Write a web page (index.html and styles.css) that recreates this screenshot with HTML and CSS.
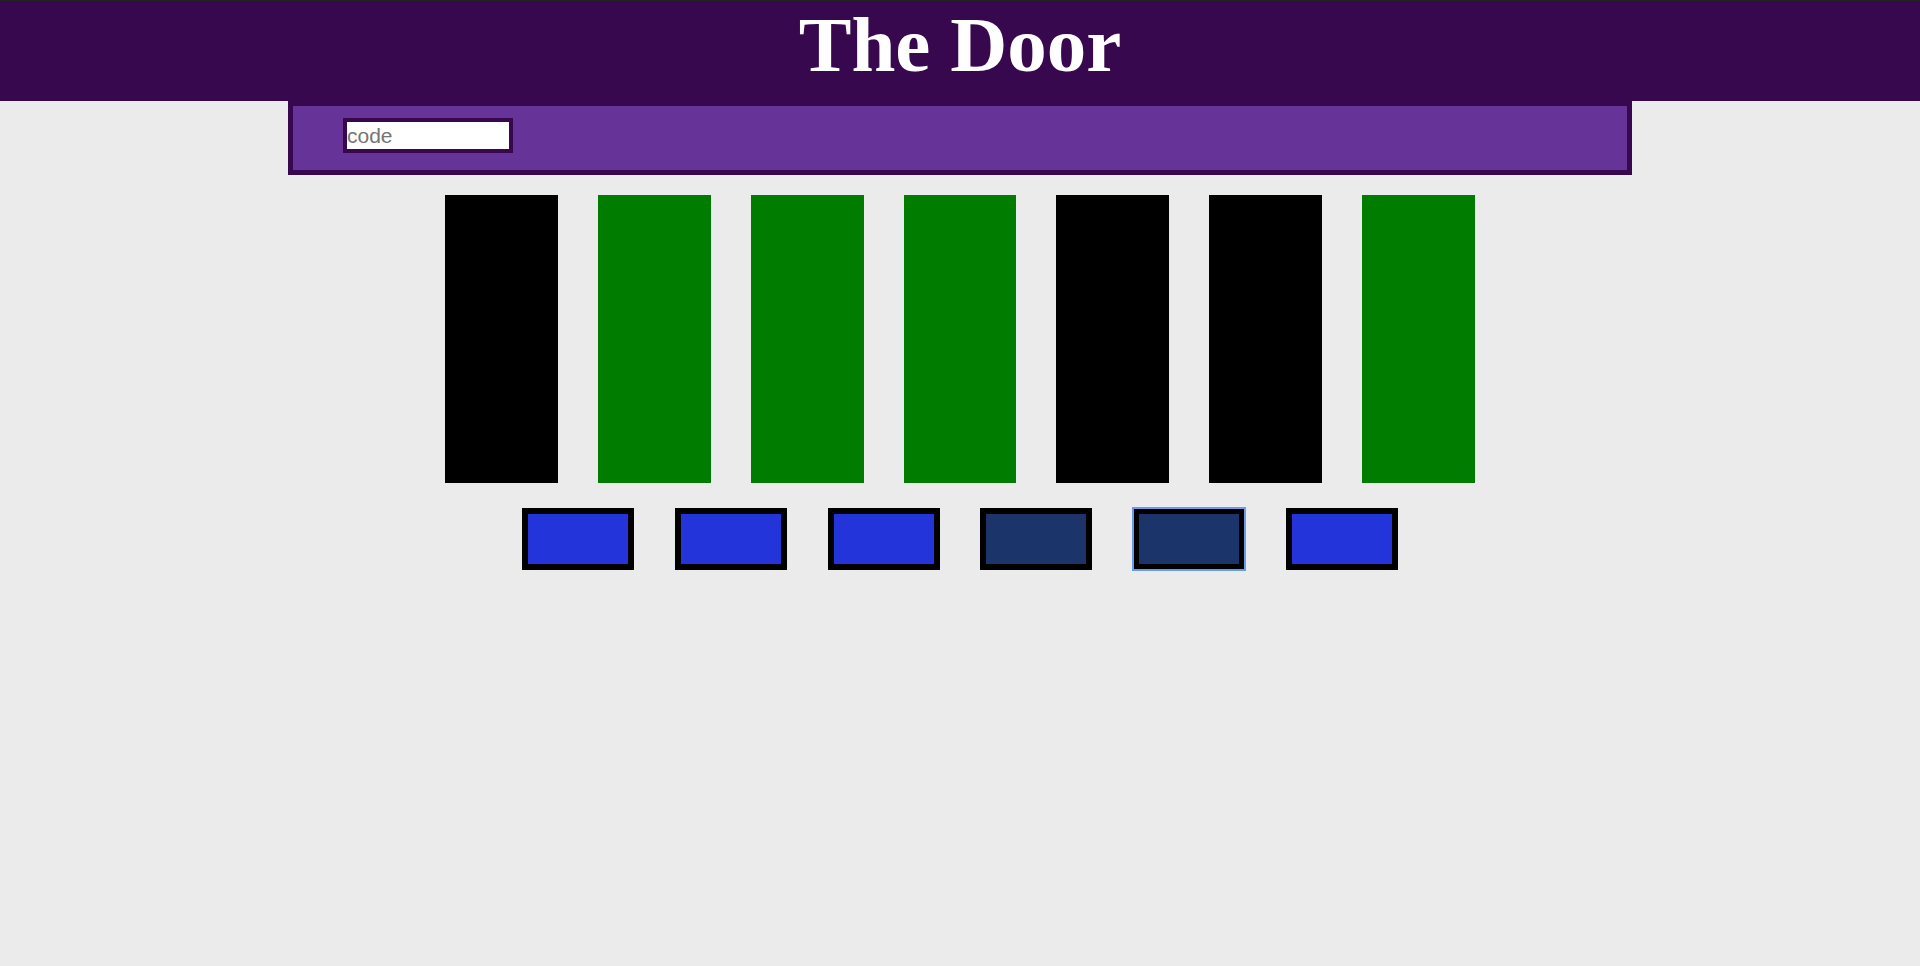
FILE: index.html
```html
<!DOCTYPE html>
<html lang="en">
<head>
<meta charset="utf-8">
<title>The Door</title>
<link rel="stylesheet" href="styles.css">
</head>
<body>
<header class="site-header">
  <h1 class="title">The Door</h1>
</header>
<div class="panel">
  <input class="code-input" type="text" placeholder="code">
</div>
<div class="bars">
  <div class="bar bar-off"></div>
  <div class="bar bar-on"></div>
  <div class="bar bar-on"></div>
  <div class="bar bar-on"></div>
  <div class="bar bar-off"></div>
  <div class="bar bar-off"></div>
  <div class="bar bar-on"></div>
</div>
<div class="buttons">
  <button class="key key-up"></button>
  <button class="key key-up"></button>
  <button class="key key-up"></button>
  <button class="key key-down"></button>
  <button class="key key-down key-focus"></button>
  <button class="key key-up"></button>
</div>
</body>
</html>
```

FILE: styles.css
```css
* {
  box-sizing: border-box;
}

html, body {
  margin: 0;
  padding: 0;
}

body {
  background: #ebebeb;
  font-family: "Liberation Sans", Arial, sans-serif;
  min-height: 966px;
}

.site-header {
  height: 101px;
  background: #37084e;
  border-top: 1px solid #222222;
  text-align: center;
}

.title {
  margin: 0;
  font-family: "Liberation Serif", "Times New Roman", serif;
  font-weight: bold;
  font-size: 79px;
  line-height: 88px;
  color: #ffffff;
}

.panel {
  width: 1344px;
  height: 74px;
  margin: 0 auto;
  background: #663399;
  border: 5px solid #37084e;
  padding: 12px 0 0 50px;
}

.code-input {
  display: block;
  width: 170px;
  height: 35px;
  margin: 0;
  padding: 0;
  border: 4px solid #37084e;
  background: #ffffff;
  font-family: "Liberation Sans", Arial, sans-serif;
  font-size: 21px;
  color: #222222;
  outline: none;
}

.code-input::placeholder {
  color: #757575;
}

.bars {
  display: flex;
  justify-content: center;
  gap: 40px;
  margin-top: 20px;
}

.bar {
  width: 112.8px;
  height: 288px;
}

.bar-off {
  background: #000000;
}

.bar-on {
  background: #007c00;
}

.buttons {
  display: flex;
  justify-content: center;
  gap: 40.8px;
  margin-top: 25px;
}

.key {
  width: 112px;
  height: 62px;
  margin: 0;
  padding: 0;
  border: 6px solid #000000;
  cursor: pointer;
}

.key-up {
  background: #2334da;
}

.key-down {
  background: #1b356b;
}

.key-focus {
  outline: 2px solid #6a9ce6;
  outline-offset: -1px;
}
```
